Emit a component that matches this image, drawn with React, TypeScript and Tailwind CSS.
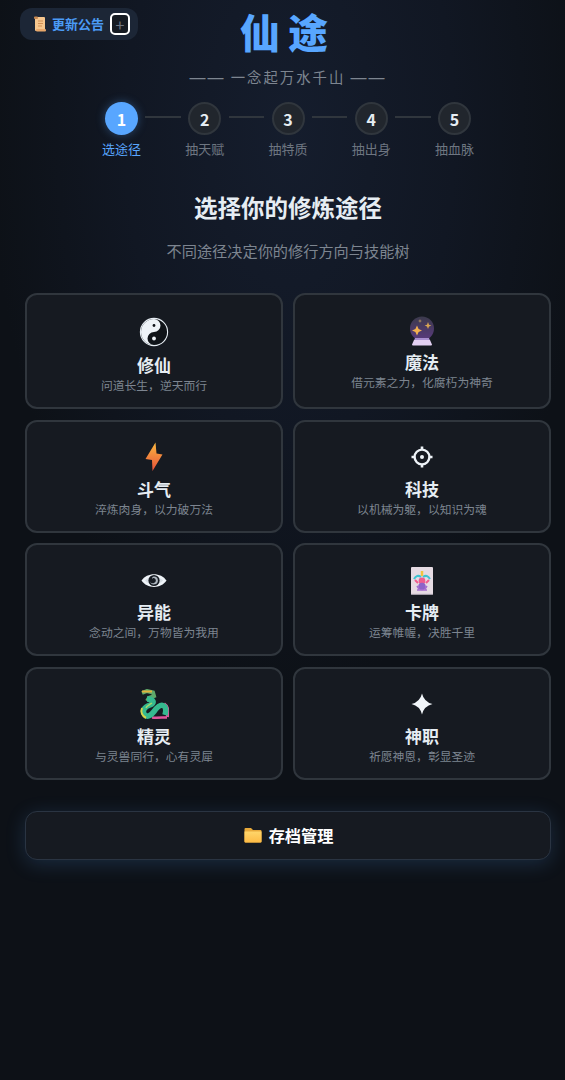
import React from "react";

const YinYang = () => (
  <svg width="30" height="30" viewBox="0 0 30 30">
    <circle cx="15" cy="15" r="13.6" fill="#0f1318" stroke="#e6edf3" strokeWidth="1.1" />
    <path d="M15 2A13 13 0 0 0 15 28A6.5 6.5 0 0 1 15 15A6.5 6.5 0 0 0 15 2Z" fill="#eef3f8" />
    <circle cx="15" cy="8.5" r="1.4" fill="#0f1318" />
    <circle cx="15" cy="21.5" r="1.9" fill="#eef3f8" />
  </svg>
);
const Ball = () => (
  <svg width="26" height="30" viewBox="0 0 26 30">
    <defs>
      <linearGradient id="orb" x1="0" y1="0" x2="0" y2="1">
        <stop offset="0" stopColor="#3b3a4c" />
        <stop offset="1" stopColor="#5a3a7e" />
      </linearGradient>
    </defs>
    <circle cx="13" cy="12.5" r="12" fill="url(#orb)" />
    <path d="M8 9.5L9.6 13L13 14.5L9.6 16L8 19.5L6.4 16L3 14.5L6.4 13Z" fill="#f2b050" />
    <path d="M19 6L20 8.7L22.4 9.5L20 10.4L19 13L18 10.4L15.6 9.5L18 8.7Z" fill="#d8a654" />
    <path d="M11 3L11.6 4.5L13 5L11.6 5.6L11 7L10.4 5.6L9 5L10.4 4.5Z" fill="#a88a60" />
    <path d="M6 22H20L21 24.5H5Z" fill="#a98fd0" />
    <path d="M5 24H21L23 28.5Q23 29.5 22 29.5H4Q3 29.5 3 28.5Z" fill="#e3d0f2" />
  </svg>
);
const Bolt = () => (
  <svg width="18" height="30" viewBox="0 0 18 30">
    <defs>
      <linearGradient id="bolt" x1="0" y1="0" x2="0" y2="1">
        <stop offset="0" stopColor="#fbb93f" />
        <stop offset="1" stopColor="#e8503a" />
      </linearGradient>
    </defs>
    <path d="M10.5 0.5L0.5 17L7 18L7.5 29L17.5 12.5L11.5 11.5Z" fill="url(#bolt)" />
  </svg>
);
const Gear = () => (
  <svg width="22" height="22" viewBox="0 0 22 22" fill="none">
    <circle cx="11" cy="11" r="7.4" stroke="#eef3f8" strokeWidth="2.4" />
    <circle cx="11" cy="11" r="2" fill="#eef3f8" />
    <path d="M11 0.5V3.5M11 18.5V21.5M0.5 11H3.5M18.5 11H21.5" stroke="#eef3f8" strokeWidth="2.6" />
  </svg>
);
const Eye = () => (
  <svg width="26" height="17" viewBox="0 0 26 17">
    <path d="M0.5 8.5C6 0 20 0 25.5 8.5C20 17 6 17 0.5 8.5Z" fill="#eef3f8" />
    <path d="M4 8.5C8.5 3.4 17.5 3.4 22 8.5C17.5 13.6 8.5 13.6 4 8.5Z" fill="#d5dce3" />
    <circle cx="13" cy="8.5" r="5.6" fill="#161b22" />
    <path d="M13 4.6A3.9 3.9 0 1 1 9.2 9.4A3 3 0 0 0 13 11A2.6 2.6 0 0 0 13 6A1.5 1.5 0 0 0 11 7.5A2.5 2.5 0 0 1 13 4.6Z" fill="#aeb7c0" />
  </svg>
);
const Card = () => (
  <svg width="24" height="30" viewBox="0 0 24 30">
    <rect x="1" y="1" width="22" height="28" rx="1" fill="#e6dbe3" />
    <path d="M1 28.4H23" stroke="#9a94a0" strokeWidth="1" />
    <path d="M12 5V10" stroke="#f2c53d" strokeWidth="2.5" />
    <path d="M4 13Q7 8 11 11M13 11Q17 8 20 13" stroke="#3fc3d0" strokeWidth="2" fill="none" />
    <path d="M5 14L8 17M19 14L16 17" stroke="#ef5d8f" strokeWidth="2" />
    <circle cx="12" cy="15" r="3.4" fill="#ef5d8f" />
    <circle cx="12" cy="20.5" r="3.8" fill="#8d63c9" />
    <path d="M7 20L9 23M17 20L15 23M7 24H17" stroke="#a66fd0" strokeWidth="1.6" />
  </svg>
);
const Dragon = () => (
  <svg width="30" height="30" viewBox="0 0 30 30" fill="none">
    <path d="M3 4L8 2L14 3.5L15 7L10 9L8 12" stroke="#5fa86a" strokeWidth="4" />
    <path d="M3 2.5H13" stroke="#e3b23c" strokeWidth="2" />
    <path d="M25 15C28 17 29.5 22 28.5 28" stroke="#e0559b" strokeWidth="3.5" />
    <path d="M13 28.5C17 29 23 28.5 28 28.5" stroke="#e0559b" strokeWidth="2.5" />
    <path d="M8 10C15 10 16 14 11 16C5 18 3 22 5.5 25.5C8 29 12 26.5 15 22.5C18 18.5 21 15.5 24 16.5C27 17.5 27 22 26 26" stroke="#35b98f" strokeWidth="5.5" />
    <path d="M3 19C1.5 23 3 27 7 29" stroke="#d8d24a" strokeWidth="2" />
    <path d="M13 14C10 16 8 17 7 19" stroke="#a7d86a" strokeWidth="1.5" />
  </svg>
);
const Sparkle = () => (
  <svg width="22" height="22" viewBox="0 0 22 22">
    <path d="M11 0.5Q13 9 21.5 11Q13 13 11 21.5Q9 13 0.5 11Q9 9 11 0.5Z" fill="#f2f6fa" />
  </svg>
);
const Folder = () => (
  <svg width="18" height="16" viewBox="0 0 18 16">
    <defs>
      <linearGradient id="folder" x1="0" y1="0" x2="0" y2="1">
        <stop offset="0" stopColor="#ffd66b" />
        <stop offset="1" stopColor="#fdbb45" />
      </linearGradient>
    </defs>
    <path d="M0.5 2Q0.5 1 1.5 1H7L9 3H16.5Q17.5 3 17.5 4V14.5Q17.5 15.5 16.5 15.5H1.5Q0.5 15.5 0.5 14.5Z" fill="#e8a93a" />
    <path d="M0.5 4.5H17.5V14.5Q17.5 15.5 16.5 15.5H1.5Q0.5 15.5 0.5 14.5Z" fill="url(#folder)" />
  </svg>
);
const Scroll = () => (
  <svg width="13" height="16" viewBox="0 0 13 16">
    <rect x="2" y="1" width="10" height="14" rx="1" fill="#f6c68e" />
    <rect x="1" y="0.5" width="4" height="2.5" rx="1" fill="#c98a52" />
    <rect x="3" y="13" width="10" height="2.5" rx="1" fill="#e8a76a" />
    <path d="M5 5H10M5 7.5H10M5 10H9" stroke="#d08f55" strokeWidth="1" />
  </svg>
);

const paths: { icon: React.ReactNode; box: string; title: string; desc: string }[] = [
  { icon: <YinYang />, box: "h-[36px]", title: "修仙", desc: "问道长生，逆天而行" },
  { icon: <Ball />, box: "h-[33px]", title: "魔法", desc: "借元素之力，化腐朽为神奇" },
  { icon: <Bolt />, box: "h-[33px]", title: "斗气", desc: "淬炼肉身，以力破万法" },
  { icon: <Gear />, box: "h-[33px]", title: "科技", desc: "以机械为躯，以知识为魂" },
  { icon: <Eye />, box: "h-[33px]", title: "异能", desc: "念动之间，万物皆为我用" },
  { icon: <Card />, box: "h-[33px]", title: "卡牌", desc: "运筹帷幄，决胜千里" },
  { icon: <Dragon />, box: "h-[33px]", title: "精灵", desc: "与灵兽同行，心有灵犀" },
  { icon: <Sparkle />, box: "h-[33px]", title: "神职", desc: "祈愿神恩，彰显圣迹" },
];

const steps = ["选途径", "抽天赋", "抽特质", "抽出身", "抽血脉"];

export default function App() {
  return (
    <div className="relative min-h-screen pl-[25px] pr-[14px] pt-[8px] font-['Noto_Sans_CJK_SC','Noto_Sans',sans-serif] text-[#e6edf3] bg-[#0d1117] bg-[radial-gradient(ellipse_300px_560px_at_290px_130px,#151d2d_0%,#111723_55%,#0d1117_100%)]">
      <div className="absolute left-[20px] top-[8px] flex h-[32px] w-[118px] items-center rounded-xl bg-[#1c2636] pl-[13px]">
        <Scroll />
        <span className="relative bottom-[1px] ml-[6px] text-[13px] font-bold leading-none text-[#4b9bf5]">更新公告</span>
        <span className="ml-[6px] flex h-[22px] w-[20px] items-center justify-center rounded-[5px] border-2 border-white bg-[#161b22] text-[16px] leading-none text-[#6e7681]">+</span>
      </div>

      <div className="flex flex-col items-center">
        <div className="h-[50px] text-[40px] font-black leading-[46px] tracking-[8px] text-[#58a6ff]">仙途</div>
        <div className="mt-[9px] text-[14.4px] leading-[20px] tracking-[2px] text-[#7d8590]">
          <span className="font-['Liberation_Sans'] text-[16px]">——</span> 一念起万水千山 <span className="font-['Liberation_Sans'] text-[16px]">——</span>
        </div>

        <div className="mt-[14px] flex items-start gap-[4px]">
          {steps.map((s, i) => (
            <React.Fragment key={s}>
              {i > 0 && <div className="mt-[14px] h-[2px] w-[35.3px] bg-[#30363d]" />}
              <div className="flex w-[40px] flex-col items-center">
                <div
                  className={
                    i === 0
                      ? "flex h-[33px] w-[33px] items-center justify-center rounded-full bg-[#58a6ff] text-[16px] font-bold text-white shadow-[0_0_10px_rgba(88,166,255,0.35)]"
                      : "flex h-[33px] w-[33px] items-center justify-center rounded-full border-2 border-[#30363d] bg-[#21262d] text-[16px] font-bold text-[#e6edf3]"
                  }
                >
                  {i + 1}
                </div>
                <div className={"mt-[4px] whitespace-nowrap text-[13px] leading-[20px] " + (i === 0 ? "text-[#58a6ff]" : "text-[#6e7681]")}>{s}</div>
              </div>
            </React.Fragment>
          ))}
        </div>

        <h2 className="mt-[31px] text-[23.5px] font-bold leading-[34px] text-[#e6edf3]">选择你的修炼途径</h2>
        <p className="mt-[15px] text-[15.2px] leading-[22px] text-[#7d8590]">不同途径决定你的修行方向与技能树</p>
      </div>

      <div className="mt-[32px] grid grid-cols-2 gap-x-[10px] gap-y-[10.5px]">
        {paths.map((p) => (
          <div key={p.title} className="flex flex-col items-center rounded-xl border-2 border-[#30363d] bg-[#161a21] pt-[19px] pb-[14px]">
            <div className={"flex w-full items-center justify-center " + p.box}>{p.icon}</div>
            <div className="mt-[3px] text-[17px] font-bold leading-[24px] text-[#e6edf3]">{p.title}</div>
            <div className="text-[11.8px] leading-[16px] text-[#7d8590]">{p.desc}</div>
          </div>
        ))}
      </div>

      <div className="mt-[31px] flex h-[49px] items-center justify-center gap-[7px] rounded-xl border border-[#2a3442] bg-[#161a21] pl-[1px] shadow-[0_4px_20px_rgba(88,166,255,0.18)]">
        <Folder />
        <span className="text-[16.2px] font-bold text-white">存档管理</span>
      </div>
    </div>
  );
}
